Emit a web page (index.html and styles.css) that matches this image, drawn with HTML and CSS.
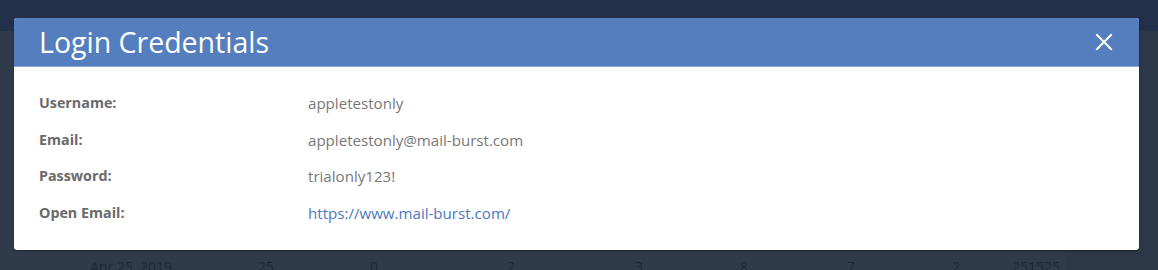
FILE: index.html
```html
<!DOCTYPE html>
<html>
<head>
<meta charset="utf-8">
<link rel="stylesheet" href="styles.css">
</head>
<body>
<div class="page">
  <div class="topbar"></div>
  <div class="content">
    <div class="table-row">
      <span class="c c-date">Apr 25, 2019</span>
      <span class="c c1">25</span>
      <span class="c c2">0</span>
      <span class="c c3">2</span>
      <span class="c c4">3</span>
      <span class="c c5">8</span>
      <span class="c c6">7</span>
      <span class="c c7">2</span>
      <span class="c c8">251525</span>
    </div>
    <div class="side-panel"></div>
  </div>
</div>
<div class="modal">
  <div class="modal-header">
    <h2 class="modal-title">Login Credentials</h2>
    <button class="close" aria-label="Close">
      <svg width="18" height="18" viewBox="0 0 18 18"><path d="M2 2 L16 16 M16 2 L2 16" stroke="#fff" stroke-width="2" stroke-linecap="square" fill="none"/></svg>
    </button>
  </div>
  <div class="modal-body">
    <div class="row"><span class="label">Username:</span><span class="value">appletestonly</span></div>
    <div class="row"><span class="label">Email:</span><span class="value">appletestonly@mail-burst.com</span></div>
    <div class="row"><span class="label">Password:</span><span class="value">trialonly123!</span></div>
    <div class="row"><span class="label">Open Email:</span><a class="value link" href="#">https://www.mail-burst.com/</a></div>
  </div>
</div>
</body>
</html>
```

FILE: styles.css
```css
html, body {
  margin: 0;
  padding: 0;
  height: 100%;
  overflow: hidden;
  font-family: "Open Sans", "Noto Sans", sans-serif;
}
.page {
  height: 270px;
  background: #2f3b4b;
  display: flex;
  flex-direction: column;
}
.topbar {
  height: 31px;
  background: #22304a;
  flex: none;
}
.content {
  flex: 1;
  display: flex;
  position: relative;
}
.table-row {
  flex: 1;
  height: 239px;
  position: relative;
  color: #1d2633;
  font-size: 14px;
}
.side-panel {
  width: 93px;
  background: #2c3848;
}
.c {
  position: absolute;
  top: 226px;
}
.c-date { left: 90px; }
.c1 { left: 258px; }
.c2 { left: 370px; }
.c3 { left: 507px; }
.c4 { left: 635px; }
.c5 { left: 740px; }
.c6 { left: 847px; }
.c7 { left: 952px; }
.c8 { left: 1012px; }

.modal {
  position: absolute;
  left: 14px;
  top: 18px;
  width: 1125px;
  background: #fff;
  border-radius: 3px;
  overflow: hidden;
  box-shadow: 0 1px 2px rgba(0,0,0,0.4);
}
.modal-header {
  height: 48px;
  background: #547ebd;
  border-bottom: 1px solid #86a6d6;
  display: flex;
  align-items: center;
  justify-content: space-between;
  padding: 0 25px;
}
.modal-title {
  margin: 0;
  font-weight: 400;
  font-size: 28.5px;
  color: #fff;
}
.close {
  border: 0;
  background: none;
  padding: 0;
  width: 18px;
  height: 18px;
  display: flex;
  margin-right: 1px;
}
.modal-body {
  padding: 26px 25px 0;
  height: 157px;
}
.row {
  display: flex;
  height: 36.5px;
  align-items: flex-start;
}
.label {
  width: 269px;
  font-weight: 700;
  font-size: 14.3px;
  color: #6a6a6a;
}
.value {
  font-size: 15.1px;
  color: #777;
}
.link {
  color: #4b78c0;
  text-decoration: none;
}
```
